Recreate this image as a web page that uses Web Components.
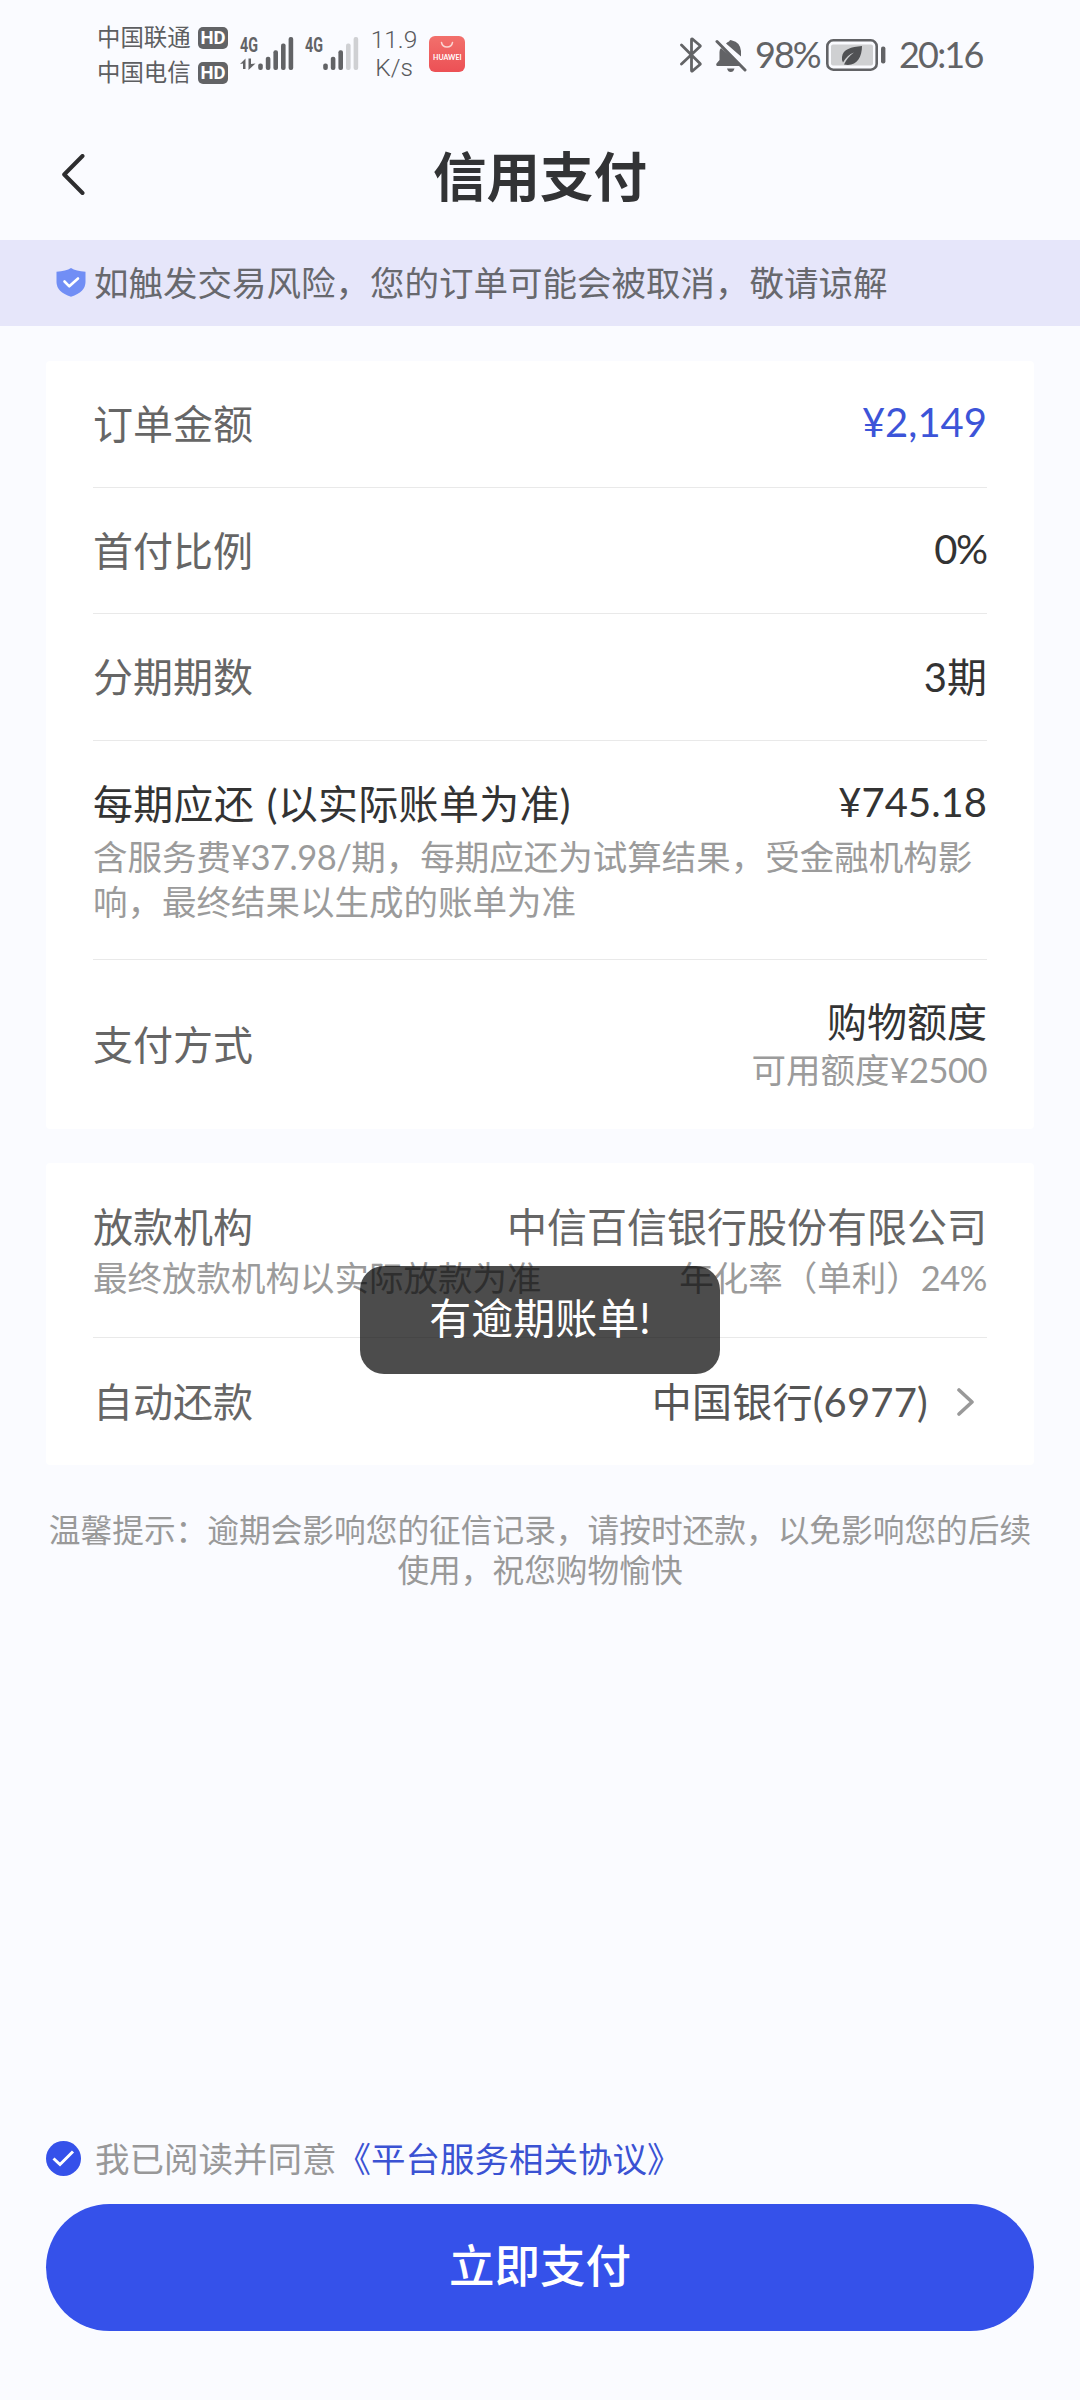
<!DOCTYPE html>
<html lang="zh-CN">
<head>
<meta charset="utf-8">
<title>信用支付</title>
<style>
body{margin:0;background:#fafbff;font-family:Lato,"Noto Sans CJK SC",sans-serif;font-size:40px;color:#333}
</style>
</head>
<body>
<pay-page></pay-page>
<script>
const define=(name,html)=>{
  const t=document.createElement('template');
  t.innerHTML=html;
  customElements.define(name,class extends HTMLElement{
    constructor(){super();this.attachShadow({mode:'open'}).append(t.content.cloneNode(true));}
  });
};

define('carrier-line',`<style>
:host{display:flex;align-items:center;height:35px;gap:7px;font-size:23.4px;line-height:35px;color:#5d5e61}
.n{width:94px;white-space:nowrap}
b{display:block;width:30px;height:22px;border-radius:5px;background:#626366;color:#fff;font:700 18.5px/22px "Roboto",sans-serif;text-align:center}
</style><span class="n"><slot></slot></span><b>HD</b>`);

class SignalBars extends HTMLElement{
  constructor(){
    super();
    const n=+this.getAttribute('level'),gap=+this.getAttribute('offset');
    let bars='';
    for(let i=0;i<5;i++){
      const h=6.6*(i+1);
      bars+=`<rect x="${gap+i*7.6}" y="${35-h}" width="4.6" height="${h}" rx="2" fill="${i<n?'#626366':'#cfd0d3'}"/>`;
    }
    const data=this.hasAttribute('data')?'<path d="M0 29 5.5 23.5V34H3V28.5ZM8.5 23.5H11V29L15.5 28.5 8.5 35Z" fill="#626366"/>':'';
    this.attachShadow({mode:'open'}).innerHTML=`<style>:host{display:block;height:44px}svg{display:block}
    text{font:700 21px "Roboto",sans-serif;fill:#626366}</style>
    <svg width="60" height="44" viewBox="-3 -8 60 44"><text x="0" y="17" textLength="18" lengthAdjust="spacingAndGlyphs">4G</text>${data}${bars}</svg>`;
  }
}
customElements.define('signal-bars',SignalBars);

define('status-bar',`<style>
:host{display:flex;align-items:flex-start;height:108px;box-sizing:border-box;padding:0 97px 0 97px;color:#626366}
.car{padding-top:20px;width:140px}
.sig{padding-top:27px;width:65px}
.s2{width:68px}
.spd{width:48px;padding-top:26px;text-align:center;font:300 24.5px/28px Roboto,sans-serif;color:#58595c}
.hw{margin:36px 0 0 11px}
.right{display:flex;margin-left:auto;align-items:center;height:110px}
.t{font-size:36px;line-height:44px;padding-bottom:2px;white-space:nowrap}
svg{display:block}
</style>
<div class="car"><carrier-line>中国联通</carrier-line><carrier-line>中国电信</carrier-line></div>
<signal-bars class="sig" level="5" offset="18.2" data></signal-bars>
<signal-bars class="sig s2" level="3" offset="18.2"></signal-bars>
<div class="spd">11.9<br>K/s</div>
<svg class="hw" width="36" height="36" viewBox="0 0 36 36"><defs><linearGradient id="g" x1="0" y1="0" x2="0" y2="1"><stop stop-color="#f2706c"/><stop offset="1" stop-color="#ec5055"/></linearGradient></defs><rect width="36" height="36" rx="6" fill="url(#g)"/><path d="M12.5 6.5a5.6 5.6 0 0 0 11 0" fill="none" stroke="#fbd5d2" stroke-width="1.5" stroke-linecap="round"/><text x="4" y="24" textLength="28.5" lengthAdjust="spacingAndGlyphs" style="font:700 7.4px Lato,sans-serif" fill="#fff">HUAWEI</text></svg>
<div class="right">
<svg width="22" height="36" viewBox="0 0 22 36" fill="none" stroke="#626366" stroke-width="2.8" stroke-linejoin="round" stroke-linecap="round"><path d="M1.5 8 20 26.5Q20.5 27 20 27.5L12.4 34Q11.5 34.5 11.5 33V3Q11.5 1.500 12.400 2L20 8.500Q20.500 9 20 9.500L1.500 27"/></svg>
<svg style="margin-left:13px" width="32" height="36" viewBox="0 0 32 36"><path d="M11 6.5Q12.500 5 14 4.500Q15 2 17 3.500Q25 5 26 14V19.500ZM6 11 26.500 29H2Q.5 28 1.500 26.500L4.500 23V15Q4.500 12.500 6 11ZM12 31.500H19.500Q18.500 35 15.750 35Q13 35 12 31.500Z" fill="#626366"/><path d="M2 4.500 30 33" stroke="#626366" stroke-width="3" stroke-linecap="round"/></svg>
<span class="t" style="width:64px;margin-left:8px;letter-spacing:-2px">98%</span>
<svg style="margin-left:7px" width="60" height="32" viewBox="0 0 60 32"><rect x="1.300" y="1.300" width="49.400" height="29.400" rx="6" fill="#fafbff" stroke="#626366" stroke-width="2.600"/><rect x="5" y="5.500" width="42" height="21" rx="2" fill="#cfd0d2"/><rect x="55" y="7.500" width="4.400" height="17" rx="2" fill="#626366"/><path d="M36 7C25 8 17 10 16 18Q15.500 21 17 23.500Q21 16 28 13.500Q21.500 18 18 25.500C30 28 36 19 36 7Z" fill="#505154"/></svg>
<span class="t" style="margin-left:13px;width:84px;letter-spacing:-1.8px">20:16</span>
</div>`);

define('nav-header',`<style>
:host{display:grid;grid-template-columns:200px 1fr 200px;align-items:center;height:132px}
svg{display:block;margin-left:60px}
h1{margin:0;padding-top:4px;text-align:center;font-size:53.5px;line-height:80px;font-weight:700;color:#323335}
</style><svg width="26" height="42" viewBox="0 0 26 42" style="padding-top:2px"><path d="M22.500 2 4.200 20.500 22.500 39" fill="none" stroke="#2d2d2f" stroke-width="4" stroke-linecap="round" stroke-linejoin="round"/></svg><h1><slot></slot></h1>`);

define('notice-bar',`<style>
:host{display:flex;align-items:center;height:85.5px;padding-left:56px;gap:8px;background:#e6e6fa;color:#67686d;font-size:34.5px;line-height:50px;white-space:nowrap}
</style><svg width="30" height="29" viewBox="0 0 30 29"><path d="M15 0Q20 3.200 29.500 3.800V14Q29.500 24 15 28.800Q.5 24 .5 14V3.800Q10 3.200 15 0Z" fill="#718ef5"/><path d="M8.500 13.500 13.300 18.300 22 10.500" fill="none" stroke="#fff" stroke-width="2.600" stroke-linecap="round" stroke-linejoin="round"/></svg><span><slot></slot></span>`);

define('info-card',`<style>
:host{display:block;margin:0 46px;padding:0 47px;background:#fff;border-radius:4px}
</style><slot></slot>`);

define('info-row',`<style>
:host{display:flex;justify-content:space-between;align-items:center;box-sizing:border-box;height:var(--h,127px);border-bottom:1px solid #e9e9e9;color:#666}
:host([last]){border-bottom:0}
:host([top]){align-items:flex-start;padding-top:39px;--sub:51px}
:host([top]) .l{width:160px}
.v{color:#333;text-align:right;display:flex;flex-direction:column;align-items:flex-end}
.l,.v{line-height:50px;white-space:nowrap}
::slotted(small){display:block;font-size:34.5px;color:#9b9b9b;line-height:var(--sub,45px)}
</style><div class="l"><slot></slot></div><div class="v"><slot name="v"></slot><slot name="s"></slot></div>`);

define('repay-row',`<style>
:host{display:grid;grid-template-columns:1fr auto;align-content:start;box-sizing:border-box;height:219px;padding-top:38px;border-bottom:1px solid #e9e9e9;line-height:50px;color:#333}
.n{word-spacing:2px;letter-spacing:.3px}.s{grid-column:1/3;font-size:34.5px;line-height:45px;color:#9b9b9b;padding-top:5px;white-space:nowrap}
</style><span class="n"><slot></slot></span><span><slot name="v"></slot></span><div class="s"><slot name="s"></slot></div>`);

define('tip-text',`<style>
:host{display:block;padding-top:45px;text-align:center;font-size:31.700px;line-height:40px;color:#999}
</style><slot></slot>`);

define('agree-line',`<style>
:host{display:flex;align-items:center;height:50px;padding-left:46px;gap:14px;font-size:34.500px;line-height:50px;color:#989899}
svg{display:block;margin-bottom:1px}
::slotted(b){font-weight:400;color:#3a52d3}
</style><svg width="35" height="35" viewBox="0 0 35 35"><circle cx="17.500" cy="17.500" r="17.500" fill="#3551ea"/><path d="M7.500 17.500 14 23.500 27 10.500" fill="none" stroke="#fff" stroke-width="3"/></svg><span><slot></slot></span>`);

define('pay-button',`<style>
:host{display:block;margin:20px 46px 69px;height:127px;border-radius:64px;background:#3551ea;color:#fff;text-align:center;font-size:45.500px;line-height:124px;font-weight:500}
</style><slot></slot>`);

define('toast-tip',`<style>
:host{position:absolute;left:360px;top:1266px;width:360px;height:108px;border-radius:24px;background:rgba(0,0,0,.7);color:#fff;text-align:center;font-size:42px;line-height:105px}
</style><slot></slot>`);

define('pay-page',`<style>
:host{display:flex;flex-direction:column;position:relative;width:1080px;height:2400px;overflow:hidden;background:#fafbff}
.one{margin-top:35.5px}.two{margin-top:34px}
.num{display:block;line-height:47px;padding-bottom:3px}
.snum{letter-spacing:-.5px}
.bank{color:#555;display:flex;align-items:center;gap:29px;padding-right:12px;letter-spacing:.2px}
.fill{flex:1}
</style>
<status-bar></status-bar>
<nav-header>信用支付</nav-header>
<notice-bar>如触发交易风险，您的订单可能会被取消，敬请谅解</notice-bar>
<info-card class="one">
<info-row>订单金额<span slot="v" class="num" style="color:#3c54d8">¥2,149</span></info-row>
<info-row style="--h:126px">首付比例<span slot="v" class="num" style="letter-spacing:-1.2px">0%</span></info-row>
<info-row>分期期数<span slot="v">3期</span></info-row>
<repay-row>每期应还 (以实际账单为准)<span slot="v" class="num">¥745.18</span><span slot="s">含服务费<span class="snum">¥37.98/</span>期，每期应还为试算结果，受金融机构影<br>响，最终结果以生成的账单为准</span></repay-row>
<info-row last style="--h:169px">支付方式<span slot="v">购物额度</span><small slot="s">可用额度<span class="snum">¥2500</span></small></info-row>
</info-card>
<info-card class="two">
<info-row top style="--h:175px">放款机构<small>最终放款机构以实际放款为准</small><span slot="v" style="color:#666">中信百信银行股份有限公司</span><small slot="s">年化率（单利）<span class="snum">24%</span></small></info-row>
<info-row last>自动还款<span slot="v" class="bank">中国银行(6977)<svg width="18" height="28" viewBox="0 0 18 28"><path d="M2 2 15 14 2 26" fill="none" stroke="#999" stroke-width="3.600" stroke-linecap="round" stroke-linejoin="round"/></svg></span></info-row>
</info-card>
<tip-text>温馨提示：逾期会影响您的征信记录，请按时还款，以免影响您的后续<br>使用，祝您购物愉快</tip-text>
<div class="fill"></div>
<agree-line>我已阅读并同意<b>《平台服务相关协议》</b></agree-line>
<pay-button>立即支付</pay-button>
<toast-tip>有逾期账单!</toast-tip>`);
</script>
</body>
</html>
